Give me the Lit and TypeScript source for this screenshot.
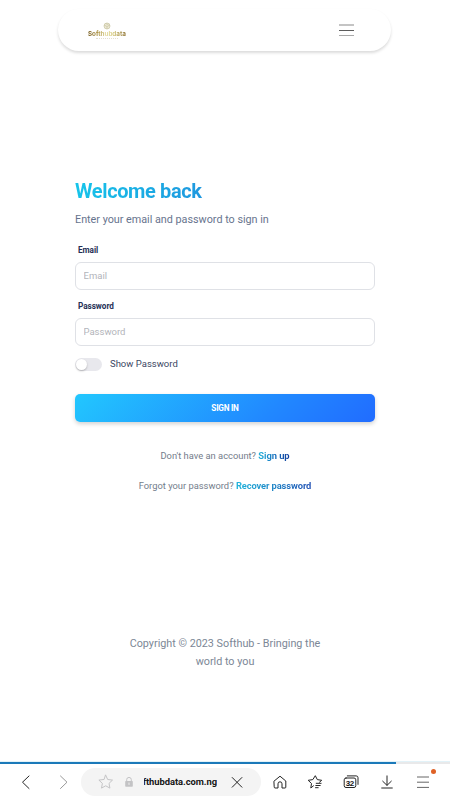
import { LitElement, html, css } from "lit";
import { customElement } from "lit/decorators.js";

@customElement("site-header")
class SiteHeader extends LitElement {
  static styles = css`
    :host { display: block; padding: 9px 59px 0 58px; }
    .bar { height: 42px; border-radius: 21px; background: #fff; box-shadow: 0 2px 3px rgba(0,0,0,.14); display: flex; align-items: center; justify-content: space-between; padding: 0 37px 0 29px; box-sizing: border-box; }
    .logo { display: flex; flex-direction: column; align-items: center; width: 40px; margin-top: 1px; }
    .globe { width: 8px; height: 8px; display: block; }
    .name { font: 700 6.3px/8px Inter, sans-serif; letter-spacing: 0; background: linear-gradient(90deg, #755a1c, #a68b36 25%, #e4dca0 48%, #d7cc80 65%, #8c6f2d); -webkit-background-clip: text; color: transparent; white-space: nowrap; }
    .tag { width: 22px; border-top: 1px dotted #e6e0cf; }
    .menu { width: 15px; height: 12px; display: block; }
  `;
  render() {
    return html`<div class="bar">
      <div class="logo">
        <svg class="globe" viewBox="0 0 8 8" fill="none" stroke="#c9c4a4" stroke-width=".7"><circle cx="4" cy="4" r="3" fill="#ece9d4"/><path d="M1 3l3 1.5L7 3M4 4.5V7M2.5 1.5l3 1.2"/></svg>
        <span class="name">Softhubdata</span><div class="tag"></div>
      </div>
      <svg class="menu" viewBox="0 0 15 12"><path fill="#c4c4c4" d="M0 0h15v2H0z"/><path fill="#5c5c5c" d="M0 6h15v1H0z"/><path fill="#a9a9a9" d="M0 11h15v1H0z"/></svg>
    </div>`;
  }
}

@customElement("sign-in-form")
class SignInForm extends LitElement {
  static styles = css`
    :host { display: block; width: 300px; margin: 0 auto; padding-top: 127px; color: #67748e; }
    h1 { margin: 0; width: 300px; font-size: 20px; line-height: 26px; font-weight: 700; letter-spacing: -.38px; background: linear-gradient(100deg, #16c5ea, #1e98df 42%, #2152ff); -webkit-background-clip: text; color: transparent; }
    .sub { margin: 8px 0 0; font-size: 10.8px; line-height: 16px; letter-spacing: -.01px; }
    label { display: block; margin: 16px 0 5px 3px; font-size: 8.2px; line-height: 13px; font-weight: 700; color: #252f55; letter-spacing: -.04px; }
    .second { margin-top: 10px; }
    input { display: block; box-sizing: border-box; width: 300px; height: 28px; border: 1px solid #dfe1e6; border-radius: 6px; padding: 0 7.5px 1px; font: 9.5px Roboto, sans-serif; background: #fff; outline: 0; }
    input::placeholder { color: #b2b4ba; opacity: 1; }
    .switch { display: flex; align-items: center; gap: 8px; margin-top: 11px; height: 14px; font-size: 9.5px; color: #3c4763; }
    .switch span { margin-bottom: 2px; }
    .track { width: 27px; height: 13px; border-radius: 7px; background: #e8e8ed; margin-top: 1px; }
    .knob { width: 11px; height: 11px; margin: 1px; border-radius: 50%; background: #fff; box-shadow: 0 1px 2px rgba(0,0,0,.25); }
    button { display: block; width: 300px; height: 28px; margin-top: 23px; padding: 0 0 1px; border: 0; border-radius: 5px; color: #fff; font: 700 8.2px Roboto, sans-serif; letter-spacing: -.24px; background: linear-gradient(135deg, #22c7fe, #2188ff 65%, #216cff); box-shadow: 0 2px 4px rgba(0,0,0,.18); }
    .line { margin: 0; text-align: center; font-size: 9.35px; line-height: 14px; color: #747d8b; }
    .first { margin: 27px 0 16px; }
    a { font-weight: 700; background: linear-gradient(90deg, #22b5dc, #1672bf 50%, #133d9b); -webkit-background-clip: text; color: transparent; letter-spacing: -.06px; }
    .recover { letter-spacing: -.11px; background: linear-gradient(90deg, #22b5dc, #1c84c6 50%, #1f4fb4); -webkit-background-clip: text; }
  `;
  render() {
    return html`<h1>Welcome back</h1>
      <p class="sub">Enter your email and password to sign in</p>
      <label>Email</label><input placeholder="Email">
      <label class="second">Password</label><input placeholder="Password">
      <div class="switch"><div class="track"><div class="knob"></div></div><span>Show Password</span></div>
      <button>SIGN IN</button>
      <p class="line first">Don't have an account? <a>Sign up</a></p>
      <p class="line">Forgot your password? <a class="recover">Recover password</a></p>`;
  }
}

@customElement("browser-bar")
class BrowserBar extends LitElement {
  static styles = css`
    :host { display: block; }
    .progress { height: 2px; background: #e9e9ea; border-top: 1px solid #e2f2f8; }
    .done { width: 396px; height: 2px; background: #1b79b9; }
    .bar { height: 36px; display: grid; grid-template-columns: 81px 180px repeat(5, 36px) 9px; align-items: center; }
    .nav { display: flex; padding-left: 18px; gap: 21px; }
    svg { display: block; fill: none; stroke: #252525; stroke-width: 1; stroke-linecap: round; stroke-linejoin: round; overflow: visible; width: 16px; height: 16px; }
    .url { height: 28px; border-radius: 14px; background: #f4f4f4; display: flex; align-items: center; padding-left: 17px; box-sizing: border-box; }
    .lock { margin-left: 7px; }
    .host { width: 73px; height: 14px; overflow: hidden; display: flex; justify-content: flex-end; margin: 0 12px 0 7px; font-size: 9.4px; line-height: 14px; font-weight: 700; color: #151515; white-space: nowrap; letter-spacing: -.05px; }
    .item { position: relative; display: flex; justify-content: center; }
    .badge { position: absolute; right: 5.5px; top: -5px; width: 5px; height: 5px; border-radius: 50%; background: #df6126; }
    .num { font: 700 8px "Liberation Sans", sans-serif; fill: #151515; stroke: none; }
    .home { margin-left: 2px; }
  `;
  render() {
    return html`<div class="progress"><div class="done"></div></div>
    <div class="bar">
      <div class="nav">
        <svg viewBox="0 0 16 16"><path d="M11 2L4.5 8.2 11 14.5"/></svg>
        <svg viewBox="0 0 16 16"><path stroke="#999" d="M5.5 2L12 8.2 5.5 14.5"/></svg>
      </div>
      <div class="url">
        <svg viewBox="0 0 16 16"><path stroke="#c4c4c6" d="M7.7 1.2l2 4.3 4.8.6-3.5 3.3.9 4.7-4.2-2.3-4.2 2.3.9-4.7L.9 6.1l4.8-.6z"/></svg>
        <svg class="lock" viewBox="0 0 16 16"><path stroke="#c3c3c5" d="M5.7 7V5.7a2.3 2.3 0 014.6 0V7"/><rect x="4.2" y="7" width="7.6" height="5.7" rx=".7" fill="#c3c3c5" stroke="none"/><path stroke="#eee" d="M8 9v1.5"/></svg>
        <div class="host"><span>softhubdata.com.ng</span></div>
        <svg viewBox="0 0 16 16"><path d="M3.2 3.5l9.7 9.7M12.9 3.5l-9.7 9.7"/></svg>
      </div>
      <div class="item home"><svg viewBox="0 0 16 16"><path d="M2.2 7L8 2.2 13.8 7v6.2a.8.8 0 01-.8.8H10V9.8a2 2 0 00-4 0V14H3a.8.8 0 01-.8-.8z"/></svg></div>
      <div class="item"><svg viewBox="0 0 16 16"><path d="M6.5 11.8L3.8 14l.7-4.5L1.2 6.3l4.6-.7L8.3 1.7l2 3.9 4.4.7-2.2 1.9M9.2 9.3h4.9M8.8 11.5h4.4M8.5 13.7h2.7"/></svg></div>
      <div class="item"><svg viewBox="0 0 16 16"><path d="M4.3 1.9h8.9a1.8 1.8 0 011.8 1.8v6.7"/><rect x="1.2" y="4" width="11.6" height="9.5" rx="1.8"/><text class="num" x="2.7" y="11.6" textLength="8.6">32</text></svg></div>
      <div class="item"><svg viewBox="0 0 16 16"><path d="M8 1.9v9.2M3.7 7.2L8 11.4l4.3-4.2M2.7 14h10.6"/></svg></div>
      <div class="item"><svg viewBox="0 0 16 16"><path stroke="#666" stroke-linecap="butt" d="M2 3h12M2 8.2h12M2 13.4h12"/></svg><div class="badge"></div></div>
    </div>`;
  }
}

@customElement("app-root")
class AppRoot extends LitElement {
  static styles = css`
    :host { display: flex; flex-direction: column; height: 800px; overflow: hidden; background: #fff; font-family: Roboto, sans-serif; }
    footer { margin: 142px auto 0; width: 200px; text-align: center; font-size: 10.8px; line-height: 17.5px; color: #7c8796; }
    browser-bar { margin-top: auto; }
  `;
  render() {
    return html`<site-header></site-header><sign-in-form></sign-in-form>
      <footer>Copyright © 2023 Softhub - Bringing the world to you</footer>
      <browser-bar></browser-bar>`;
  }
}
